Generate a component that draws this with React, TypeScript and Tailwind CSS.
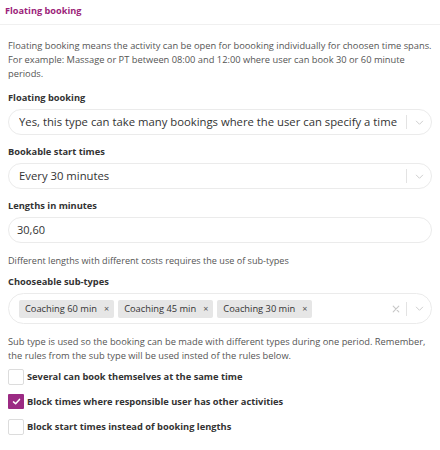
import React from 'react';

const Chevron = () => (
  <svg width="9" height="9" viewBox="0 0 20 20" className="text-[#c8c8c8]">
    <path d="M3 7l7 7 7-7" fill="none" stroke="currentColor" strokeWidth="2" strokeLinecap="round" strokeLinejoin="round" />
  </svg>
);

const Select = ({ value }: { value: string }) => (
  <div className="flex h-[26px] items-center rounded-full border border-[#ebebeb] bg-white pl-[10px] pr-[7px]">
    <span className="flex-1 truncate text-[11.3px] text-[#333]">{value}</span>
    <span className="mr-[8px] ml-[4px] h-[14px] w-px bg-[#e3e3e3]" />
    <Chevron />
  </div>
);

const Chip = ({ label }: { label: string }) => (
  <span className="flex h-[18px] items-center gap-[7px] rounded-[2px] bg-[#e6e6e6] pl-[6px] pr-[5px] text-[9.3px] text-[#333]">
    {label}
    <span className="text-[9px] text-[#555]">×</span>
  </span>
);

const Label = ({ children }: { children: React.ReactNode }) => (
  <div className="mb-[5px] text-[9.3px] leading-[13px] font-bold text-[#333]">{children}</div>
);

const Check = ({ label, checked }: { label: string; checked?: boolean }) => (
  <label className="flex h-[17px] items-center gap-[3px]">
    {checked ? (
      <span className="flex h-[15px] w-[16px] items-center justify-center rounded-[1px] bg-[#9b2a83]">
        <svg width="9" height="9" viewBox="0 0 12 12">
          <path d="M2 6.5 4.8 9 10 3.2" fill="none" stroke="white" strokeWidth="2" strokeLinecap="round" strokeLinejoin="round" />
        </svg>
      </span>
    ) : (
      <span className="h-[16px] w-[16px] rounded-[2px] border border-[#dcdcdc] bg-white" />
    )}
    <span className="text-[9.3px] font-bold text-[#333]">{label}</span>
  </label>
);

export default function App() {
  return (
    <div className="h-[450px] w-[440px] bg-white font-['Open_Sans',sans-serif] text-[#444]">
      <div className="h-[25px] border-b border-[#f0f0f0] pl-[5px] pt-[4px]">
        <h1 className="text-[9.2px] leading-[13px] font-bold text-[#9c1f7a]">Floating booking</h1>
      </div>
      <div className="px-2">
        <p className="mt-[14px] text-[9.3px] leading-[14px] text-[#555]">
          Floating booking means the activity can be open for boooking individually for choosen time spans. For example: Massage or PT between 08:00 and 12:00 where user can book 30 or 60 minute periods.
        </p>

        <div className="mt-[10px]">
          <Label>Floating booking</Label>
          <Select value="Yes, this type can take many bookings where the user can specify a time" />
        </div>

        <div className="mt-[10px]">
          <Label>Bookable start times</Label>
          <Select value="Every 30 minutes" />
        </div>

        <div className="mt-[10px]">
          <Label>Lengths in minutes</Label>
          <div className="flex h-[26px] items-center rounded-full border border-[#ebebeb] px-[8px] text-[11px] text-[#333]">30,60</div>
        </div>

        <p className="mt-[12px] text-[9.1px] leading-[12px] text-[#555]">Different lengths with different costs requires the use of sub-types</p>

        <div className="mt-[8px]">
          <Label>Chooseable sub-types</Label>
          <div className="flex h-[31px] items-center rounded-full border border-[#ebebeb] pl-[10px] pr-[7px]">
            <div className="flex flex-1 gap-[4px]">
              <Chip label="Coaching 60 min" />
              <Chip label="Coaching 45 min" />
              <Chip label="Coaching 30 min" />
            </div>
            <svg width="8" height="8" viewBox="0 0 10 10" className="text-[#c8c8c8]">
              <path d="M1.5 1.5l7 7M8.5 1.5l-7 7" stroke="currentColor" strokeWidth="1.4" strokeLinecap="round" />
            </svg>
            <span className="mr-[8px] ml-[6px] h-[14px] w-px bg-[#e3e3e3]" />
            <Chevron />
          </div>
        </div>

        <p className="mt-[11px] text-[9.3px] leading-[14px] text-[#555]">
          Sub type is used so the booking can be made with different types during one period. Remember, the rules from the sub type will be used insted of the rules below.
        </p>

        <div className="mt-[5px] flex flex-col gap-[8px]">
          <Check label="Several can book themselves at the same time" />
          <Check label="Block times where responsible user has other activities" checked />
          <Check label="Block start times instead of booking lengths" />
        </div>
      </div>
    </div>
  );
}
